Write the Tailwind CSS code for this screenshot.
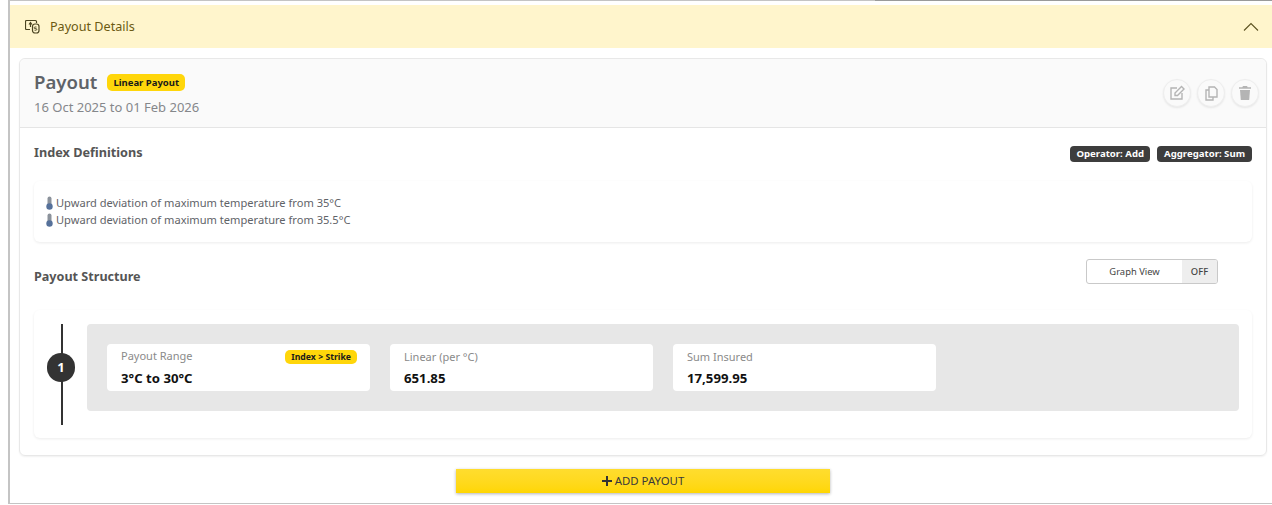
<!DOCTYPE html>
<html lang="en">
<head>
  <meta charset="UTF-8">
  <title>Payout Details</title>
  <script src="https://cdn.jsdelivr.net/npm/@tailwindcss/browser@4"></script>
</head>
<body class="bg-white font-['Noto_Sans',sans-serif] overflow-hidden">
  <div class="relative w-[1272px] h-[505px] flex flex-col pl-2">
    <div class="absolute left-[875px] right-0 top-0 h-[1px] bg-[#9a9a9a]"></div>
    <div class="h-[504px] border-l-2 border-t border-b border-[#c4c4c4] flex flex-col">
      <!-- accordion header -->
      <div class="mt-[4px] h-[43px] shrink-0 bg-[#fff5cc] flex items-center justify-between pl-[15px] pr-[13px]">
        <div class="flex items-center gap-[10px] text-[#6b5a12]">
          <svg class="w-[15px] h-[15px] -mt-[1px]" viewBox="0 0 15 15" fill="none" stroke="#4a4320" stroke-width="1.2">
            <path d="M5 10.5H1.5a1 1 0 0 1-1-1v-7a1 1 0 0 1 1-1h9a1 1 0 0 1 1 1V4"/>
            <path d="M4 5.5l1.5-2 1.5 2M5.5 3.5V8"/>
            <rect x="7.5" y="5" width="6.5" height="9" rx="2.5"/>
            <path d="M11.5 8h-1.5a.7.7 0 0 0 0 1.6h1a.7.7 0 0 1 0 1.6H9.5" stroke-width="0.9"/>
          </svg>
          <span class="text-[12.6px] leading-none pt-[2px]">Payout Details</span>
        </div>
        <svg class="w-[16px] h-[10px]" viewBox="0 0 16 10" fill="none" stroke="#5c5220" stroke-width="1.1"><path d="M1 8.5 8 1.5l7 7"/></svg>
      </div>

      <!-- payout card -->
      <div class="mt-[10px] ml-[9px] mr-[5px] h-[398px] border border-[#e8e8e8] rounded-md shadow-[0_1px_2px_rgba(0,0,0,0.06)] flex flex-col">
        <div class="h-[69px] shrink-0 bg-[#fafafa] border-b border-[#e5e5e5] rounded-t-md flex items-start justify-between pl-[14px] pr-[7px]">
          <div>
            <div class="flex items-center gap-[10px] pt-[8px]">
              <span class="text-[18.6px] leading-[30px] font-semibold text-[#5f6368]">Payout</span>
              <span class="h-[17px] px-[6px] rounded-[5px] bg-[#ffd60a] text-[9.5px] leading-[17px] font-bold text-[#1a1a1a]">Linear Payout</span>
            </div>
            <div class="text-[13px] leading-[18px] mt-[1px] text-[#85878b]">16 Oct 2025 to 01 Feb 2026</div>
          </div>
          <div class="flex gap-[6px] mt-[20px]">
            <div class="w-[28px] h-[28px] rounded-full bg-[#fafafa] border border-[#eeeeee] shadow-[0_1px_2px_rgba(0,0,0,0.08)] flex items-center justify-center">
              <svg class="w-[16px] h-[16px]" viewBox="0 0 16 16" fill="none" stroke="#b4b4b4" stroke-width="1.4"><path d="M8 3H2v11h11V8"/><path d="M6 10.5V8l6.5-6.5L15 4l-6.5 6.5z"/></svg>
            </div>
            <div class="w-[28px] h-[28px] rounded-full bg-[#fafafa] border border-[#eeeeee] shadow-[0_1px_2px_rgba(0,0,0,0.08)] flex items-center justify-center">
              <svg class="w-[16px] h-[16px]" viewBox="0 0 16 16" fill="none" stroke="#b4b4b4" stroke-width="1.4"><path d="M6 2h5.5L14 4.5V12H6z"/><path d="M6 5H3v10h7v-3"/></svg>
            </div>
            <div class="w-[28px] h-[28px] rounded-full bg-[#fafafa] border border-[#eeeeee] shadow-[0_1px_2px_rgba(0,0,0,0.08)] flex items-center justify-center">
              <svg class="w-[16px] h-[16px]" viewBox="0 0 16 16" fill="#b4b4b4"><path d="M6 1h4l.7 1.2H14v1.6H2V2.2h3.3z"/><path d="M3 5h10l-.8 10H3.8z"/></svg>
            </div>
          </div>
        </div>

        <div class="flex-1 px-[14px]">
          <div class="flex items-start justify-between pt-[16px] h-[53px]">
            <h3 class="text-[12.7px] leading-[17px] font-bold text-[#555555]">Index Definitions</h3>
            <div class="flex gap-[7px] mt-[2px]">
              <span class="h-[16px] px-[6px] rounded-[4px] bg-[#3d3d3d] text-white text-[9.6px] leading-[16px] font-bold">Operator: Add</span>
              <span class="h-[16px] px-[7px] rounded-[4px] bg-[#3d3d3d] text-white text-[9.6px] leading-[16px] font-bold">Aggregator: Sum</span>
            </div>
          </div>
          <div class="h-[61px] rounded-md shadow-[0_1px_3px_rgba(0,0,0,0.08)] pl-[11px] pt-[13px] text-[11.1px] leading-[17px] text-[#5f6368]">
            <div class="flex items-center">
              <svg class="w-[9px] h-[14px] mr-[2px]" viewBox="0 0 9 14"><rect x="2.5" y="0.5" width="4" height="9" rx="2" fill="#8b929b"/><circle cx="4.5" cy="10.5" r="3.2" fill="#56719a"/></svg>
              <span>Upward deviation of maximum temperature from 35°C</span>
            </div>
            <div class="flex items-center">
              <svg class="w-[9px] h-[14px] mr-[2px]" viewBox="0 0 9 14"><rect x="2.5" y="0.5" width="4" height="9" rx="2" fill="#8b929b"/><circle cx="4.5" cy="10.5" r="3.2" fill="#56719a"/></svg>
              <span>Upward deviation of maximum temperature from 35.5°C</span>
            </div>
          </div>

          <div class="flex items-start justify-between h-[68px] pt-[26px]">
            <h3 class="text-[12.6px] leading-[17px] font-bold text-[#555555]">Payout Structure</h3>
            <div class="mr-[34px] -mt-[9px] w-[132px] h-[25px] border border-[#c9c9c9] rounded-[3px] flex text-[9.4px] text-[#444444] overflow-hidden">
              <span class="flex-1 leading-[23px] text-center">Graph View</span>
              <span class="w-[35px] bg-[#eeeeee] leading-[23px] text-center font-medium">OFF</span>
            </div>
          </div>

          <div class="h-[128px] rounded-md shadow-[0_1px_3px_rgba(0,0,0,0.08)] flex px-[13px] pt-[14px]">
            <div class="relative w-[28px] h-[101px] shrink-0 flex justify-center">
              <div class="absolute left-[14px] top-0 bottom-0 w-[2px] bg-[#333333]"></div>
              <div class="relative mt-[29px] w-[29px] h-[29px] rounded-full bg-[#333333] text-white text-[13px] font-bold flex items-center justify-center">1</div>
            </div>
            <div class="ml-[12px] flex-1 h-[87px] bg-[#e7e7e7] rounded-[4px] flex gap-[20px] pl-[20px] pt-[20px]">
              <div class="w-[263px] h-[47px] bg-white rounded-[4px] pl-[14px] pr-[13px] pt-[4px]">
                <div class="flex items-center justify-between h-[17px]">
                  <span class="text-[11px] text-[#8a8a8a]">Payout Range</span>
                  <span class="h-[14px] px-[6px] rounded-[5px] bg-[#ffd60a] text-[8.7px] leading-[14px] font-bold text-[#1a1a1a]">Index &gt; Strike</span>
                </div>
                <div class="text-[13.2px] leading-[18px] mt-[4px] font-bold text-[#111111]">3°C to 30°C</div>
              </div>
              <div class="w-[263px] h-[47px] bg-white rounded-[4px] pl-[14px] pt-[4px]">
                <div class="text-[11px] leading-[17px] text-[#8a8a8a]">Linear (per °C)</div>
                <div class="text-[13.2px] leading-[18px] mt-[4px] font-bold text-[#111111]">651.85</div>
              </div>
              <div class="w-[263px] h-[47px] bg-white rounded-[4px] pl-[14px] pt-[4px]">
                <div class="text-[11px] leading-[17px] text-[#8a8a8a]">Sum Insured</div>
                <div class="text-[13.2px] leading-[18px] mt-[4px] font-bold text-[#111111]">17,599.95</div>
              </div>
            </div>
          </div>
        </div>
      </div>

      <!-- add payout -->
      <div class="pl-[446px] mt-[13px]">
        <button class="w-[374px] h-[24px] bg-gradient-to-b from-[#ffdd2e] to-[#ffd600] shadow-[0_1px_3px_rgba(0,0,0,0.3)] flex items-center justify-center gap-[3px] text-[11.4px] text-[#3a3a3a]">
          <svg class="w-[10px] h-[10px]" viewBox="0 0 10 10" fill="#333333"><path d="M4 0h2v4h4v2H6v4H4V6H0V4h4z"/></svg>
          ADD PAYOUT
        </button>
      </div>
    </div>
  </div>
</body>
</html>
